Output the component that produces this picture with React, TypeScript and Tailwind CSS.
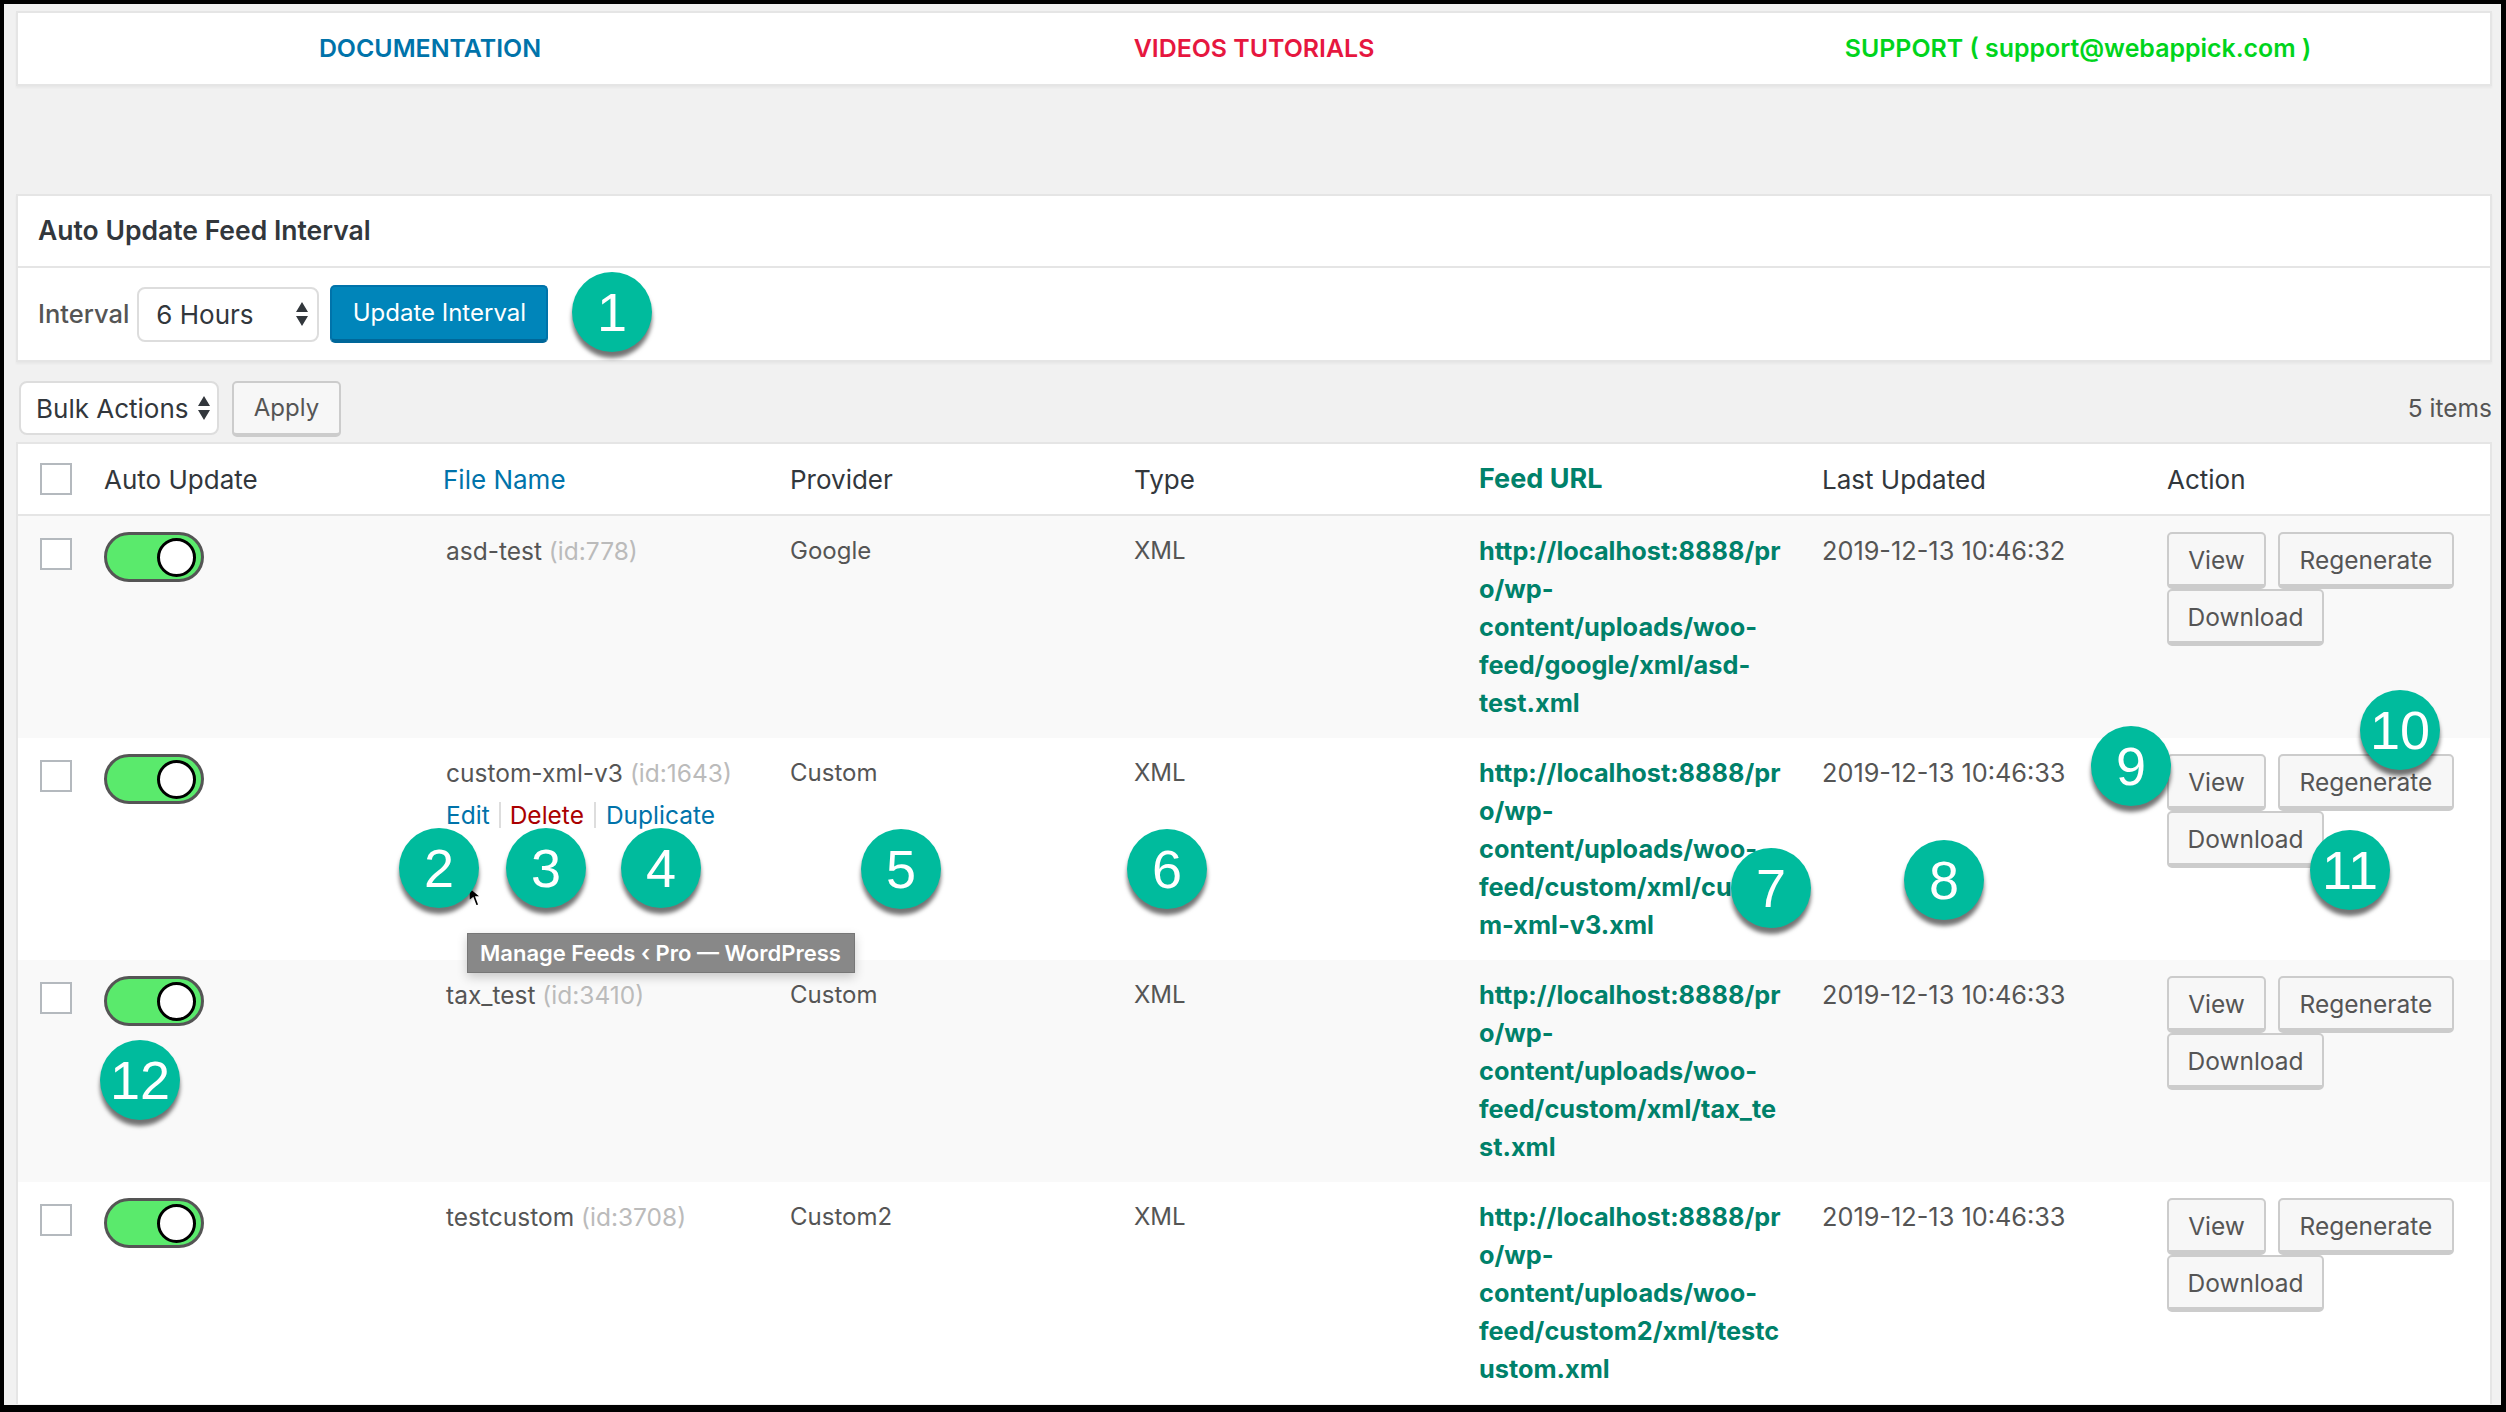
const columns = "grid grid-cols-[86px_339px_347px_344px_345px_343px_345px_323px]";

const feeds = [
  {
    name: "asd-test",
    id: "id:778",
    provider: "Google",
    url: ["http://localhost:8888/pr", "o/wp-", "content/uploads/woo-", "feed/google/xml/asd-", "test.xml"],
    updated: "2019-12-13 10:46:32",
    actions: false,
    bg: "bg-[#f9f9f9]",
  },
  {
    name: "custom-xml-v3",
    id: "id:1643",
    provider: "Custom",
    url: ["http://localhost:8888/pr", "o/wp-", "content/uploads/woo-", "feed/custom/xml/cust", "m-xml-v3.xml"],
    updated: "2019-12-13 10:46:33",
    actions: true,
    bg: "bg-white",
  },
  {
    name: "tax_test",
    id: "id:3410",
    provider: "Custom",
    url: ["http://localhost:8888/pr", "o/wp-", "content/uploads/woo-", "feed/custom/xml/tax_te", "st.xml"],
    updated: "2019-12-13 10:46:33",
    actions: false,
    bg: "bg-[#f9f9f9]",
  },
  {
    name: "testcustom",
    id: "id:3708",
    provider: "Custom2",
    url: ["http://localhost:8888/pr", "o/wp-", "content/uploads/woo-", "feed/custom2/xml/testc", "ustom.xml"],
    updated: "2019-12-13 10:46:33",
    actions: false,
    bg: "bg-white",
  },
];

// numbered callouts drawn over the screenshot
const bubbles = [
  { n: "1", pos: "left-[572px] top-[272px]" },
  { n: "2", pos: "left-[399px] top-[828px]" },
  { n: "3", pos: "left-[506px] top-[828px]" },
  { n: "4", pos: "left-[621px] top-[828px]" },
  { n: "5", pos: "left-[861px] top-[829px]" },
  { n: "6", pos: "left-[1127px] top-[829px]" },
  { n: "7", pos: "left-[1731px] top-[848px]" },
  { n: "8", pos: "left-[1904px] top-[840px]" },
  { n: "9", pos: "left-[2091px] top-[726px]" },
  { n: "10", pos: "left-[2360px] top-[690px]" },
  { n: "11", pos: "left-[2310px] top-[830px]" },
  { n: "12", pos: "left-[100px] top-[1040px]" },
];

function SelectArrows() {
  return (
    <svg width="14" height="26" viewBox="0 0 14 26" className="shrink-0">
      <path d="M7 1 L13 11 H1 Z M7 25 L1 15 H13 Z" fill="#32373c" />
    </svg>
  );
}

function Checkbox({ className = "" }: { className?: string }) {
  return <input type="checkbox" className={`h-8 w-8 appearance-none border-2 border-[#b4b9be] bg-white ${className}`} />;
}

function Toggle() {
  return (
    <div className="flex h-[50px] w-[100px] items-center justify-end rounded-[25px] border-[3px] border-[#555] bg-[#5aea6c] pr-[5px]">
      <div className="h-[39px] w-[39px] rounded-full border-[3px] border-black bg-white" />
    </div>
  );
}

function ActionButton({ label, width }: { label: string; width: string }) {
  return (
    <button className={`flex h-[57px] items-center justify-center rounded-[5px] border-2 border-b-[5px] border-[#ccc] bg-[#f7f7f7] pt-[2px] text-[24.5px] text-[#555] ${width}`}>
      {label}
    </button>
  );
}

function FeedRow({ feed }: { feed: (typeof feeds)[number] }) {
  return (
    <div className={`${columns} h-[222px] pt-4 text-[24px] leading-[38px] text-[#555] ${feed.bg}`}>
      <div className="pl-[22px] pt-1.5 leading-none">
        <Checkbox />
      </div>
      <div>
        <Toggle />
      </div>
      <div className="pl-[3px] text-[24.5px]">
        <div>
          {feed.name} <span className="text-[#bbb]">({feed.id})</span>
        </div>
        {feed.actions && (
          <div className="mt-[4px] flex items-center text-[#0073aa]">
            <span>Edit</span>
            <span className="mx-[9px] h-[26px] w-0.5 bg-[#ddd]" />
            <span className="text-[#a00]">Delete</span>
            <span className="mx-[10px] h-[26px] w-0.5 bg-[#ddd]" />
            <span>Duplicate</span>
          </div>
        )}
      </div>
      <div>{feed.provider}</div>
      <div>XML</div>
      <div className="text-[25.3px] font-bold text-[#00816a]">
        {feed.url.map((line) => (
          <div key={line}>{line}</div>
        ))}
      </div>
      <div className="text-[25.3px]">{feed.updated}</div>
      <div className="flex flex-wrap content-start gap-x-3">
        <ActionButton label="View" width="w-[99px]" />
        <ActionButton label="Regenerate" width="w-[176px]" />
        <ActionButton label="Download" width="w-[157px]" />
      </div>
    </div>
  );
}

export default function App() {
  return (
    <div
      className="relative h-[1412px] w-[2506px] overflow-hidden bg-black pb-[7px] pl-1 pr-[5px] pt-1 text-[24px] text-[#32373c]"
      style={{ fontFamily: "Inter, 'Liberation Sans', sans-serif" }}
    >
      <div className="h-full overflow-hidden bg-[#f1f1f1] pl-3 pr-[9px] pt-[7px]">
        <div className="grid h-[75px] grid-cols-3 items-center border-2 border-[#e5e5e5] bg-white text-center text-[24.9px] font-semibold shadow-[0_2px_2px_rgba(0,0,0,0.04)]">
          <div className="text-[#0073aa]">DOCUMENTATION</div>
          <div className="text-[#e6173f]">VIDEOS TUTORIALS</div>
          <div className="text-[#00d41c]">SUPPORT ( support@webappick.com )</div>
        </div>

        <div className="mt-[108px] border-2 border-[#e5e5e5] bg-white shadow-[0_2px_2px_rgba(0,0,0,0.04)]">
          <div className="flex h-[70px] items-center pl-5 text-[26.5px] font-semibold text-[#32373c]">
            Auto Update Feed Interval
          </div>
          <div className="flex h-[94px] items-center border-t-2 border-[#e5e5e5] pl-5">
            <span className="text-[25.5px] font-medium text-[#555]">Interval</span>
            <div className="ml-2 flex h-[55px] w-[182px] items-center justify-between rounded-[8px] border-2 border-[#ddd] bg-white pl-[17px] pr-[8px] text-[26px] text-[#32373c]">
              6 Hours
              <SelectArrows />
            </div>
            <button className="ml-[11px] h-[58px] w-[218px] rounded-[5px] border-2 border-b-[4px] border-[#0073aa] border-b-[#006799] bg-[#0085ba] text-[24px] text-white">
              Update Interval
            </button>
          </div>
        </div>

        <div className="flex h-[80px] items-start justify-between pt-[19px]">
          <div className="ml-[3px] flex">
            <div className="flex h-[54px] w-[200px] items-center justify-between rounded-[8px] border-2 border-[#ddd] bg-white pl-[15px] pr-[6px] text-[26px] text-[#32373c]">
              Bulk Actions
              <SelectArrows />
            </div>
            <button className="ml-[13px] h-[56px] w-[109px] rounded-[5px] border-2 border-b-[4px] border-[#ccc] bg-[#f7f7f7] text-[24px] text-[#555]">
              Apply
            </button>
          </div>
          <span className="pt-[9px] text-[24.5px] text-[#555]">5 items</span>
        </div>

        <div className="border-x-2 border-t-2 border-[#e5e5e5] bg-white">
          <div className={`${columns} h-[72px] items-center border-b-2 border-[#e5e5e5] text-[26px] text-[#32373c]`}>
            <div className="flex pl-[22px]">
              <Checkbox />
            </div>
            <div>Auto Update</div>
            <div className="text-[#0073aa]">File Name</div>
            <div>Provider</div>
            <div>Type</div>
            <div className="text-[27px] font-bold text-[#00816a]">Feed URL</div>
            <div>Last Updated</div>
            <div>Action</div>
          </div>
          {feeds.map((feed) => (
            <FeedRow key={feed.name} feed={feed} />
          ))}
        </div>
      </div>

      <div className="absolute left-[467px] top-[933px] flex h-10 w-[388px] items-center border border-[#777] bg-[#888] pl-3 text-[22px] font-semibold text-white shadow-[0_4px_10px_rgba(0,0,0,0.2)]">
        Manage Feeds ‹ Pro — WordPress
      </div>

      <svg width="16" height="22" viewBox="0 0 16 22" className="absolute left-[467px] top-[886px]">
        <path d="M2 1 L2 15 L6 12 L9 20 L12 19 L9 11 L14 11 Z" fill="#000" stroke="#fff" strokeWidth="1.5" />
      </svg>

      {bubbles.map((b) => (
        <div
          key={b.n}
          className={`absolute flex h-20 w-20 items-center justify-center rounded-full bg-[#00bb9d] text-[54px] leading-none text-white shadow-[0_6px_4px_rgba(0,0,0,0.55)] ${b.pos}`}
          style={{ fontFamily: "'Liberation Sans', sans-serif" }}
        >
          {b.n}
        </div>
      ))}
    </div>
  );
}
